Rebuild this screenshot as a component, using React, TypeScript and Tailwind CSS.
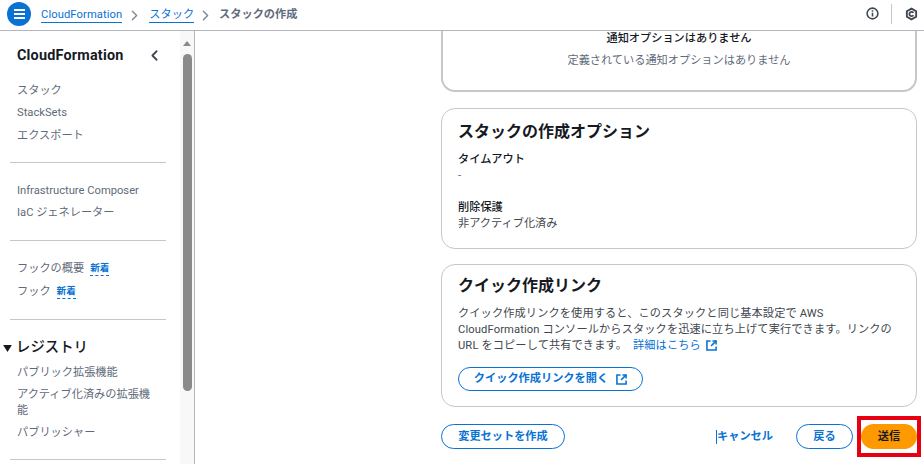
import React from 'react';
import { ChevronLeft, ChevronRight } from 'lucide-react';

const FONT = "font-['Roboto','Noto_Sans_CJK_JP',sans-serif]";

const ExternalIcon: React.FC<{ className?: string }> = ({ className }) => (
  <svg viewBox="0 0 12 12" className={className} fill="none" stroke="currentColor" strokeWidth="1.7">
    <path d="M5 1H1v10h10V7" />
    <path d="M7 1h4v4" />
    <path d="M11 1L5.5 6.5" />
  </svg>
);

const NewBadge: React.FC = () => (
  <span className="ml-[6px] text-[9.6px] leading-[14px] font-semibold text-[#0972d3] border-b border-dashed border-[#0972d3]">新着</span>
);

const NavItem: React.FC<{ children: React.ReactNode; className?: string }> = ({ children, className }) => (
  <div className={`pl-[17px] pr-[20px] text-[11.2px] text-[#5f6b7a] ${className ?? ''}`}>{children}</div>
);

const Divider: React.FC = () => <div className="ml-[10px] w-[156px] h-px bg-[#c6c6cd]" />;

const Sidebar: React.FC = () => (
  <aside className="w-[195px] shrink-0 flex border-r border-[#b4b4bb] overflow-hidden">
    <div className="w-[180px] shrink-0 flex flex-col">
      <div className="flex items-center justify-between pl-[17px] pr-[17px] pt-[9px] h-[40px]">
        <span className="text-[14.4px] font-bold text-[#16191f] tracking-[0.2px]">CloudFormation</span>
        <ChevronLeft size={17} strokeWidth={2.5} className="text-[#414750]" />
      </div>
      <NavItem className="mt-[9px] leading-[22px]">スタック</NavItem>
      <NavItem className="leading-[22px]">StackSets</NavItem>
      <NavItem className="leading-[23px] mb-[15px]">エクスポート</NavItem>
      <Divider />
      <NavItem className="mt-[17px] leading-[22px]">Infrastructure Composer</NavItem>
      <NavItem className="leading-[22px] mb-[16px]">IaC ジェネレーター</NavItem>
      <Divider />
      <NavItem className="mt-[16px] leading-[23px] flex items-center">フックの概要<NewBadge /></NavItem>
      <NavItem className="leading-[23px] mb-[16px] flex items-center">フック<NewBadge /></NavItem>
      <Divider />
      <div className="mt-[16px] h-[24px] flex items-center text-[14.4px] font-medium text-[#16191f]">
        <svg viewBox="0 0 10 8" className="w-[9px] h-[7px] ml-[3px] mr-[4px] text-[#16191f]" fill="currentColor">
          <path d="M0 0h10L5 8z" />
        </svg>
        レジストリ
      </div>
      <NavItem className="leading-[23px] mt-[1px]">パブリック拡張機能</NavItem>
      <NavItem className="leading-[16px] mt-[3px]">アクティブ化済みの拡張機能</NavItem>
      <NavItem className="leading-[22px] mt-[3px] mb-[15px]">パブリッシャー</NavItem>
      <Divider />
    </div>
    <div className="w-[14px] shrink-0 bg-[#f8f8f8] flex flex-col items-center pt-[10px]">
      <div className="w-0 h-0 border-l-[4px] border-r-[4px] border-b-[5px] border-l-transparent border-r-transparent border-b-[#8a8a8a]" />
      <div className="mt-[8px] w-[9px] h-[337px] rounded-[5px] bg-[#8a8a8a]" />
    </div>
  </aside>
);

const Card: React.FC<{ children: React.ReactNode; className?: string }> = ({ children, className }) => (
  <section className={`w-[476px] bg-white border border-[#c6c6cd] rounded-[14px] ${className ?? ''}`}>{children}</section>
);

const App: React.FC = () => (
  <div className={`relative w-[924px] h-[464px] flex flex-col overflow-hidden bg-white text-[#16191f] ${FONT}`}>
    <header className="h-[31px] shrink-0 flex items-center border-b border-[#b4b4bb] pl-[7px] pr-[6px] pb-[3px]">
      <div className="w-[24px] h-[24px] rounded-full bg-[#0972d3] flex flex-col items-center justify-center gap-[2px]">
        <span className="w-[11px] h-[2px] bg-white" />
        <span className="w-[11px] h-[2px] bg-white" />
        <span className="w-[11px] h-[2px] bg-white" />
      </div>
      <nav className="flex items-center pt-[3px]">
        <a className="ml-[10px] text-[11.2px] text-[#0972d3] border-b border-[#0972d3] leading-[14px] tracking-[0.1px]">CloudFormation</a>
        <ChevronRight size={17} strokeWidth={2} className="ml-[4px] mr-[6px] text-[#7d8998]" />
        <a className="text-[11.2px] text-[#0972d3] border-b border-[#0972d3] leading-[15px]">スタック</a>
        <ChevronRight size={17} strokeWidth={2} className="ml-[3px] mr-[5px] text-[#7d8998]" />
        <span className="text-[11.2px] font-bold text-[#5f6b7a]">スタックの作成</span>
      </nav>
      <div className="ml-auto flex items-center">
        <svg viewBox="0 0 14 14" className="w-[13px] h-[13px] text-[#414750]" fill="none" stroke="currentColor" strokeWidth="1.7">
          <circle cx="7" cy="7" r="5.8" />
          <path d="M7 6.2v4M7 3.6v1.4" />
        </svg>
        <span className="w-px h-[20px] bg-[#c6c6cd] ml-[12px] mr-[11px]" />
        <svg viewBox="0 0 14 14" className="ml-[2px] w-[13px] h-[14px] text-[#414750]" fill="none" stroke="currentColor" strokeWidth="2">
          <path d="M7 1.2l5 2.9v5.8l-5 2.9-5-2.9V4.1z" />
          <path d="M9 8.2A2.3 2.3 0 1 1 9 5.8" />
        </svg>
      </div>
    </header>

    <div className="flex-1 min-h-0 flex">
      <Sidebar />
      <main className="flex-1 min-w-0 flex flex-col pl-[246px]">
        <Card className="h-[61px] border-t-0 border-2 rounded-t-none text-center">
          <p className="text-[11.2px] font-medium leading-[16px]">通知オプションはありません</p>
          <p className="mt-[6px] text-[11.2px] leading-[16px] text-[#5f6b7a]">定義されている通知オプションはありません</p>
        </Card>

        <Card className="mt-[16px] h-[141px] px-[16px] pt-[12px]">
          <h2 className="text-[16px] font-bold leading-[22px]">スタックの作成オプション</h2>
          <p className="mt-[9px] text-[11.2px] font-medium leading-[16px]">タイムアウト</p>
          <p className="text-[11.2px] leading-[16px] text-[#5f6b7a]">-</p>
          <p className="mt-[16px] text-[11.2px] font-medium leading-[16px]">削除保護</p>
          <p className="text-[11.2px] leading-[16px] text-[#414750]">非アクティブ化済み</p>
        </Card>

        <Card className="mt-[15px] h-[143px] px-[16px] pt-[10px]">
          <h2 className="text-[16px] font-bold leading-[22px]">クイック作成リンク</h2>
          <p className="mt-[9px] text-[11.2px] leading-[16px] tracking-[0.12px] text-[#414750]">
            クイック作成リンクを使用すると、このスタックと同じ基本設定で AWS CloudFormation コンソールからスタックを迅速に立ち上げて実行できます。リンクの URL をコピーして共有できます。
            <a className="ml-[6px] text-[#0972d3]">
              詳細はこちら
              <ExternalIcon className="inline-block ml-[5px] w-[11px] h-[11px] align-[-2px]" />
            </a>
          </p>
          <button className="mt-[13px] h-[24px] w-[185px] pt-[1px] flex items-center justify-center rounded-full border border-[#0972d3] text-[11.2px] font-bold text-[#0972d3]">
            クイック作成リンクを開く
            <ExternalIcon className="ml-[8px] w-[11px] h-[11px]" />
          </button>
        </Card>

        <div className="w-[476px] mt-[17px] flex items-center">
          <button className="h-[25px] w-[124px] pt-[2px] rounded-full border border-[#0972d3] text-[11.2px] font-bold text-[#0972d3]">変更セットを作成</button>
          <span className="ml-auto border-l border-[#0972d3] h-[14px] pt-[1px] flex items-center text-[11.2px] font-bold text-[#0972d3] whitespace-nowrap">キャンセル</span>
          <button className="ml-[23px] h-[25px] w-[57px] pt-[2px] rounded-full border border-[#0972d3] text-[11.2px] font-bold text-[#0972d3]">戻る</button>
          <button className="ml-[8px] h-[25px] w-[56px] pt-[2px] rounded-full bg-[#ff9900] text-[11.2px] font-bold text-[#16191f]">送信</button>
        </div>
      </main>
    </div>

    {/* red annotation around the submit button */}
    <div className="absolute left-[857px] top-[416px] w-[64px] h-[41px] border-[4px] border-[#e60012]" />
  </div>
);

export default App;
